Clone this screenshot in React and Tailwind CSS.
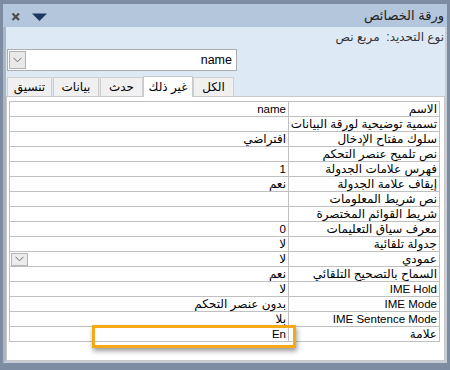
const rows = [
  ["الاسم", "name"],
  ["تسمية توضيحية لورقة البيانات", ""],
  ["سلوك مفتاح الإدخال", "افتراضي"],
  ["نص تلميح عنصر التحكم", ""],
  ["فهرس علامات الجدولة", "1"],
  ["إيقاف علامة الجدولة", "نعم"],
  ["نص شريط المعلومات", ""],
  ["شريط القوائم المختصرة", ""],
  ["معرف سياق التعليمات", "0"],
  ["جدولة تلقائية", "لا"],
  ["عمودي", "لا", true],
  ["السماح بالتصحيح التلقائي", "نعم"],
  ["IME Hold", "لا"],
  ["IME Mode", "بدون عنصر التحكم"],
  ["IME Sentence Mode", "بلا"],
  ["علامة", "En"],
];

const isLatin = (s) => /^[A-Za-z0-9 ]+$/.test(s);

function Chevron() {
  return (
    <svg width="9" height="6" viewBox="0 0 9 6">
      <path d="M0.5 0.8 L4.5 4.8 L8.5 0.8" fill="none" stroke="#6b6b6b" strokeWidth="1" />
    </svg>
  );
}

function Txt({ s }) {
  if (!s) return null;
  return isLatin(s) ? <span className="text-[11.5px]">{s}</span> : <span>{s}</span>;
}

const tabs = [
  { t: "تنسيق", w: "w-[45px]", sel: false, extra: "" },
  { t: "بيانات", w: "w-[46px]", sel: false, extra: "ml-[1px]" },
  { t: "حدث", w: "w-[43px]", sel: false, extra: "ml-[1px]" },
  { t: "غير ذلك", w: "w-[50px]", sel: true, extra: "" },
  { t: "الكل", w: "w-[41px]", sel: false, extra: "" },
];

export default function App() {
  return (
    <div className="relative w-[450px] h-[370px] bg-[#7d8ca1] pt-[4px] pl-[3px] pr-[3px] pb-[7px] flex flex-col font-['Liberation_Sans','DejaVu_Sans',sans-serif] text-[12px] text-black">
      <div className="h-[23px] bg-[#b4c6dc] flex items-center justify-between">
        <div className="flex items-center">
          <svg width="50" height="23" viewBox="0 0 50 23">
            <path d="M9.5 9.5 L16 16 M16 9.5 L9.5 16" stroke="#4d4d4d" strokeWidth="2.2" strokeLinecap="butt" />
            <polygon points="29,9.5 44,9.5 36.5,17" fill="#1d3760" />
          </svg>
        </div>
        <div dir="rtl" className="pr-[3px] text-[13px] text-[#222]">ورقة الخصائص</div>
      </div>
      <div className="flex-1 flex flex-col bg-[#dee9f6] border-l-[3px] border-l-[#a9b7c8] border-r-2 border-r-[#c6ced9] border-b-2 border-b-[#c6ced9]">
        <div dir="rtl" className="h-[19px] flex items-center pr-[1px] text-[#333]">
          نوع التحديد:&nbsp;&nbsp;مربع نص
        </div>
        <div className="mt-[3px] ml-[1px] w-[230px] h-[22px] bg-white border border-[#adadad] flex items-center pl-[1px]">
          <div className="w-[17px] h-[18px] bg-[#e9e9e9] border border-[#b0b0b0] flex items-center justify-center">
            <Chevron />
          </div>
          <div className="flex-1 text-right pr-[4px] text-[12.5px]">name</div>
        </div>
        <div className="h-[25px] flex items-end pl-[1px]">
          {tabs.map((tab) =>
            tab.sel ? (
              <div
                key={tab.t}
                dir="rtl"
                className={`${tab.w} h-[21px] -mb-[1px] relative z-10 bg-white border-t border-l border-r border-[#c8c8c8] flex items-center justify-center text-[12px]`}
              >
                {tab.t}
              </div>
            ) : (
              <div
                key={tab.t}
                dir="rtl"
                className={`${tab.w} ${tab.extra} h-[19px] bg-[#f0f0f0] border-t border-l border-r border-[#cfcfcf] flex items-center justify-center text-[12px]`}
              >
                {tab.t}
              </div>
            )
          )}
        </div>
        <div className="flex-1 bg-white border border-[#c8c8c8] pt-[4px] pl-[2px]">
          <div className="w-[431px] border-t border-l border-r border-[#c0c0c0]">
            {rows.map(([label, value, dd]) => (
              <div key={label} className="h-[15px] flex border-b border-[#c0c0c0]">
                <div className="w-[279px] h-full border-r border-[#c0c0c0] flex items-center pl-[1px]">
                  {dd && (
                    <div className="w-[17px] h-[13px] bg-[#ececec] border border-[#b5b5b5] flex items-center justify-center">
                      <Chevron />
                    </div>
                  )}
                  <div dir="rtl" className="flex-1 pr-[2px] leading-[14px] whitespace-nowrap">
                    <Txt s={value} />
                  </div>
                </div>
                <div dir="rtl" className="flex-1 pr-[2px] leading-[14px] whitespace-nowrap">
                  <Txt s={label} />
                </div>
              </div>
            ))}
          </div>
        </div>
      </div>
      <div className="absolute left-[92px] top-[325px] w-[204px] h-[23px] border-[3px] border-[#f5a918] shadow-[1px_3px_5px_rgba(0,0,0,0.4)]" />
    </div>
  );
}
